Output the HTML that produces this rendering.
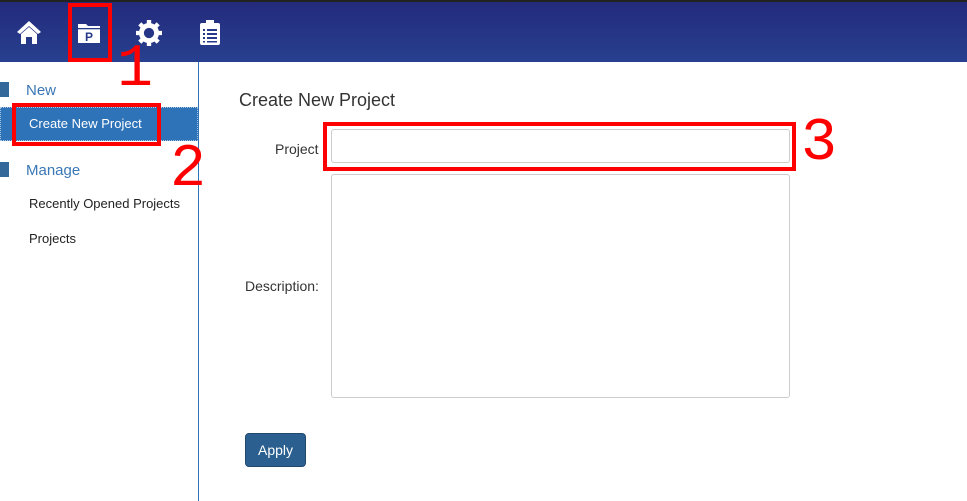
<!DOCTYPE html>
<html><head><style>
*{margin:0;padding:0;box-sizing:border-box}
body{width:967px;height:501px;background:#fff;font-family:"Liberation Sans",sans-serif;position:relative;overflow:hidden}
.hdr{position:absolute;left:0;top:0;width:967px;height:62px;background:linear-gradient(#242a7c,#27408f);border-top:2px solid #222}
.side{position:absolute;left:0;top:62px;width:199px;height:439px;border-right:1px solid #2e72b8}
.abs{position:absolute}
.red{position:absolute;border:4px solid #f00}
.num{position:absolute;color:#f00;font-size:60px;font-family:"Liberation Mono",monospace;line-height:1}
</style></head><body>
<div class="hdr"></div>
<svg class="abs" style="left:15px;top:18px" width="28" height="28" viewBox="0 0 28 28"><path d="M14 3 L2 14 L5 16 L14 8 L23 16 L26 14 Z" fill="#fff"/><path d="M6 16 L14 9 L22 16 V26 H17 V19 H11 V26 H6 Z" fill="#fff"/></svg>
<svg class="abs" style="left:78px;top:22px" width="24" height="22" viewBox="0 0 24 22"><path d="M0 2 H8 L10 4 H22 V21 H0 Z" fill="#fff"/><rect x="0" y="6" width="22" height="1.3" fill="#263a8a"/><text x="7" y="19" font-family="Liberation Sans" font-weight="bold" font-size="12" fill="#263a8a">P</text></svg>
<svg class="abs" style="left:136px;top:20px" width="26" height="26" viewBox="0 0 24 24"><circle cx="12" cy="12" r="7" fill="none" stroke="#fff" stroke-width="4.5"/><g stroke="#fff" stroke-width="4"><path d="M12 0v6M12 18v6M0 12h6M18 12h6M3.5 3.5l4 4M16.5 16.5l4 4M3.5 20.5l4-4M16.5 7.5l4-4"/></g></svg>
<svg class="abs" style="left:200px;top:20px" width="20" height="25" viewBox="0 0 20 25"><rect x="0" y="3" width="20" height="22" rx="2" fill="#fff"/><rect x="6" y="0" width="8" height="5" fill="#fff"/><g fill="#263a8a"><rect x="3" y="9" width="2" height="2"/><rect x="7" y="9" width="10" height="2"/><rect x="3" y="13" width="2" height="2"/><rect x="7" y="13" width="10" height="2"/><rect x="3" y="17" width="2" height="2"/><rect x="7" y="17" width="10" height="2"/><rect x="3" y="21" width="2" height="1.5"/><rect x="7" y="21" width="10" height="1.5"/></g></svg>
<div class="side"></div>
<div class="abs" style="left:0;top:82px;width:9px;height:15px;background:#34679a"></div>
<div class="abs" style="left:26px;top:82px;font-size:15px;color:#3a77b5">New</div>
<div class="abs" style="left:0;top:107px;width:198px;height:34px;background:#2e72b8;border:1px dotted #a8c4e0"></div>
<div class="abs" style="left:29px;top:116px;font-size:13px;color:#fff">Create New Project</div>
<div class="abs" style="left:0;top:162px;width:9px;height:15px;background:#34679a"></div>
<div class="abs" style="left:26px;top:162px;font-size:15px;color:#3a77b5">Manage</div>
<div class="abs" style="left:29px;top:196px;font-size:13px;color:#222">Recently Opened Projects</div>
<div class="abs" style="left:29px;top:231px;font-size:13px;color:#222">Projects</div>
<div class="abs" style="left:239px;top:90px;font-size:18px;color:#333">Create New Project</div>
<div class="abs" style="left:275px;top:141px;font-size:14px;color:#333">Project</div>
<div class="abs" style="left:331px;top:129px;width:459px;height:34px;border:1px solid #ccc;border-radius:3px"></div>
<div class="abs" style="left:331px;top:174px;width:459px;height:224px;border:1px solid #ccc;border-radius:3px"></div>
<div class="abs" style="left:245px;top:278px;font-size:14px;color:#333">Description:</div>
<div class="abs" style="left:245px;top:433px;width:61px;height:34px;background:#2a5f8f;border:1px solid #20496e;border-radius:4px;color:#fff;font-size:14px;text-align:center;line-height:32px">Apply</div>
<div class="red" style="left:68px;top:3px;width:44px;height:59px"></div>
<div class="red" style="left:12px;top:103px;width:149px;height:43px"></div>
<div class="red" style="left:323px;top:122px;width:473px;height:49px"></div>
<div class="num" style="left:117px;top:40px">1</div>
<div class="num" style="left:170px;top:140px">2</div>
<div class="num" style="left:801px;top:114px">3</div>
</body></html>
